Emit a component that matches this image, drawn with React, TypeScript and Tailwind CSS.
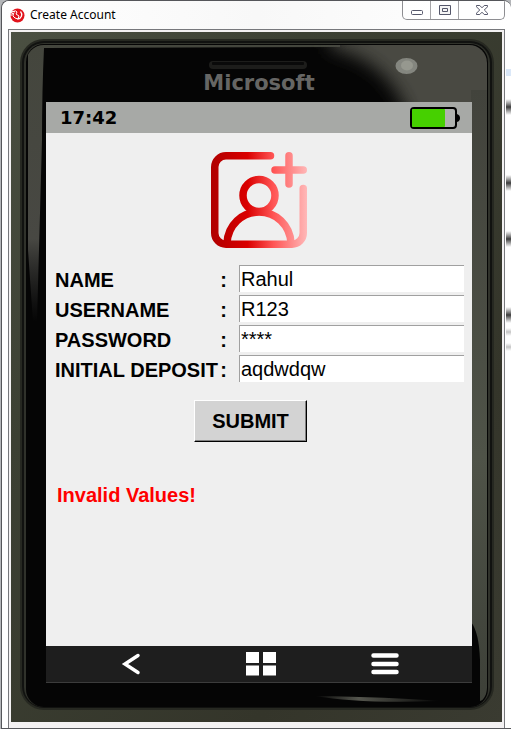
import React, { useState } from "react";

function TitleBar() {
  return (
    <header className="flex h-[28px] items-start justify-between bg-gradient-to-r from-white via-[#f8f8f8] to-white pl-2">
      <div className="flex h-7 items-center gap-[5px]">
        <svg width="15" height="15" viewBox="0 0 15 15" aria-hidden="true">
          <circle cx="7.5" cy="7.5" r="7" fill="#e1131c" />
          <path d="M0 4 4 6M0 7h4M1 3l4 1" fill="none" stroke="#fff" strokeWidth="1.2" />
          <path d="M3 3.500q3-1.500 4 .5L6 6l3 2-1 3-3-1-2-2" fill="none" stroke="#fff" strokeWidth="1" />
          <path d="M10.500 3.500c2.500 3 1 7-3 7.500" fill="none" stroke="#fff" strokeWidth="1.300" />
        </svg>
        <h1 className="font-['Noto_Sans',sans-serif] text-xs text-black">Create Account</h1>
      </div>
      <div className="mr-1.5 flex h-[19px] rounded-b-[5px] border border-t-0 border-[#8e8e92] bg-white/70">
        <button aria-label="Minimize" className="flex w-7 items-center justify-center border-r border-[#a5a5a8]">
          <svg width="12" height="12" viewBox="0 0 12 12">
            <rect x=".5" y="6.500" width="11" height="4" rx="1" fill="#fff" stroke="#55576a" />
          </svg>
        </button>
        <button aria-label="Maximize" className="flex w-7 items-center justify-center border-r border-[#a5a5a8]">
          <svg width="12" height="10" viewBox="0 0 12 10">
            <path d="M.5.5h11v9H.5zM3.500 3.500h5v3h-5z" fill="#f5f5f5" stroke="#55576a" />
          </svg>
        </button>
        <button aria-label="Close" className="flex w-[45px] items-center justify-center">
          <svg width="12" height="10" viewBox="0 0 12 10">
            <path d="M.5.5h3.300L6 2.800 8.200.5h3.300v1.300L8.300 5l3.200 3.200v1.300H8.200L6 7.200 3.800 9.500H.5V8.200L3.700 5 .5 1.800z" fill="#fff" stroke="#55576a" />
          </svg>
        </button>
      </div>
    </header>
  );
}

function PhoneShell() {
  return (
    <svg
      className="absolute inset-0 h-full w-full"
      viewBox="11 32 491 690"
      preserveAspectRatio="none"
      aria-hidden="true"
    >
      <defs>
        <linearGradient id="case" x1="0" y1="0" x2="1" y2="1">
          <stop offset="0" stopColor="#4b5042" />
          <stop offset=".3" stopColor="#3c4033" />
          <stop offset=".75" stopColor="#34352a" />
          <stop offset="1" stopColor="#3a3b31" />
        </linearGradient>
        <linearGradient id="leftGlare" x1="0" y1="0" x2="0" y2="1">
          <stop offset="0" stopColor="#44463d" />
          <stop offset=".7" stopColor="#484843" />
          <stop offset="1" stopColor="#333" stopOpacity="0" />
        </linearGradient>
        <linearGradient id="rightGlare" x1="0" y1="0" x2="0" y2="1">
          <stop offset="0" stopColor="#42433c" />
          <stop offset=".6" stopColor="#4f5348" />
          <stop offset="1" stopColor="#3d4038" />
        </linearGradient>
        <linearGradient id="foot" x1="0" y1="0" x2="1" y2="0">
          <stop offset="0" stopColor="#55564e" stopOpacity="0" />
          <stop offset=".35" stopColor="#55564e" />
          <stop offset="1" stopColor="#55564e" stopOpacity="0" />
        </linearGradient>
        <filter id="soft" x="-20%" y="-50%" width="140%" height="200%">
          <feGaussianBlur stdDeviation="9" />
        </filter>
        <clipPath id="glass">
          <rect x="26" y="45" width="461" height="661" rx="18" />
        </clipPath>
      </defs>
      <rect x="11" y="32" width="491" height="690" fill="url(#case)" />
      <rect x="20" y="39" width="474" height="671" rx="24" fill="#262821" />
      <rect x="22" y="41" width="470" height="667" rx="22" fill="#111210" />
      <rect x="24" y="43" width="466" height="664" rx="20" fill="#30322b" />
      <rect x="26" y="44" width="462" height="663" rx="18" fill="#050505" />
      <g clipPath="url(#glass)">
        <path d="M28 45H340V47L44 48Q42 90 42 140L37 322H33L28 250z" fill="url(#leftGlare)" />
        <path d="M330 20H520V130H412Q396 62 330 48z" fill="#484942" filter="url(#soft)" />
        <path d="M471 90H487V690Q487 699 480 701V660Q479 632 471 622z" fill="url(#rightGlare)" />
        <path d="M315 696Q390 697 440 701Q360 704 315 696z" fill="url(#foot)" />
      </g>
      <rect x="209" y="61" width="98" height="8" rx="4" fill="#1d1d1b" />
      <rect x="212" y="62" width="92" height="3" rx="1" fill="#0a0a0a" />
      <ellipse cx="406.500" cy="66" rx="11" ry="8" fill="#84867f" />
      <ellipse cx="407" cy="65.500" rx="6" ry="5" fill="#96988f" />
    </svg>
  );
}

function StatusBar() {
  return (
    <div className="flex h-[31px] items-center justify-between bg-[#a7a9a6] pr-3 pl-3.5">
      <time className="font-['DejaVu_Sans',sans-serif] text-lg font-bold text-black">17:42</time>
      <svg width="50" height="22" viewBox="0 0 50 22" role="img" aria-label="Battery">
        <rect x="1" y="1" width="45" height="20" rx="3" fill="#b0b2af" stroke="#000" strokeWidth="2" />
        <rect x="2" y="2" width="33" height="18" rx="1" fill="#46d000" />
        <path d="M47 7q3 1 3 4t-3 4z" fill="#000" />
      </svg>
    </div>
  );
}

function AddUserIcon() {
  return (
    <svg className="mx-auto" width="96" height="96" viewBox="0 0 96 96" aria-hidden="true">
      <defs>
        <linearGradient id="red" gradientUnits="userSpaceOnUse" x1="0" y1="0" x2="96" y2="0">
          <stop offset="0" stopColor="#af0000" />
          <stop offset=".38" stopColor="#da0000" />
          <stop offset=".65" stopColor="#ff5555" />
          <stop offset="1" stopColor="#ffb8b8" />
        </linearGradient>
      </defs>
      <g fill="none" stroke="url(#red)" strokeWidth="7.500" strokeLinecap="round">
        <path d="M59.500 3.750H15A11.250 11.250 0 0 0 3.750 15V81A11.250 11.250 0 0 0 15 92.250H81A11.250 11.250 0 0 0 92.250 81V36.500" />
        <path d="M64 18H92.250M78 3.750V32" />
        <circle cx="48" cy="43.500" r="16" />
        <path d="M16 91C17 73 31 60 48 60S79 73 80 91" />
      </g>
    </svg>
  );
}

const initialFields = [
  { id: "name", label: "NAME", value: "Rahul" },
  { id: "username", label: "USERNAME", value: "R123" },
  { id: "password", label: "PASSWORD", value: "****" },
  { id: "deposit", label: "INITIAL DEPOSIT", value: "aqdwdqw" },
];

function AccountForm() {
  const [fields, setFields] = useState(initialFields);
  return (
    <form className="mt-[17px] flex flex-col pr-2 pl-[9px]" onSubmit={(e) => e.preventDefault()}>
      <div className="flex flex-col gap-[3px]">
        {fields.map((field) => (
          <div key={field.id} className="flex h-[27px] items-center gap-3">
            <label htmlFor={field.id} className="flex w-[172px] justify-between pt-0.5 font-bold whitespace-nowrap">
              <span>{field.label}</span>
              <span>:</span>
            </label>
            <input
              id={field.id}
              value={field.value}
              onChange={(e) =>
                setFields(fields.map((f) => (f.id === field.id ? { ...f, value: e.target.value } : f)))
              }
              className="h-full min-w-0 flex-1 border-t border-l border-[#a0a0a0] bg-white px-px outline-none"
            />
          </div>
        ))}
      </div>
      <button
        type="submit"
        className="mt-[18px] mr-[157px] ml-[139px] h-[42px] border border-t-white border-r-black border-b-black border-l-white bg-[#d3d3d3] font-bold shadow-[inset_-1px_-1px_0_#808080]"
      >
        SUBMIT
      </button>
      <p role="alert" className="mt-[39px] pl-0.5 font-bold text-[#ff0000]">
        Invalid Values!
      </p>
    </form>
  );
}

function NavBar() {
  return (
    <nav className="flex h-[37px] items-center justify-between border-b border-[#3c3c3c] bg-[#1e1e1e] pr-[69px] pl-[61px]">
      <button aria-label="Back" className="flex w-12 justify-center">
        <svg width="20" height="22" viewBox="0 0 20 22">
          <path d="M17 2.500 4 11l13 8.500" fill="none" stroke="#fff" strokeWidth="3.500" strokeLinecap="round" />
        </svg>
      </button>
      <button aria-label="Home" className="flex w-9 justify-center">
        <svg width="30" height="24" viewBox="0 0 30 24">
          <path d="M0 0h13v11H0zM17 0h13v11H17zM0 13.500h13v10H0zM17 13.500h13v10H17z" fill="#fff" />
        </svg>
      </button>
      <button aria-label="Menu" className="flex w-9 justify-center">
        <svg width="28" height="22" viewBox="0 0 28 22">
          <path d="M2.500 2.500h23M2.500 11h23M2.500 19h23" stroke="#fff" strokeWidth="4.500" strokeLinecap="round" />
        </svg>
      </button>
    </nav>
  );
}

function FrameEdge() {
  return (
    <svg width="6" height="700" viewBox="0 0 6 700" aria-hidden="true">
      <defs>
        <linearGradient id="spot" x1="0" y1="0" x2="0" y2="1">
          <stop offset="0" stopColor="#555" stopOpacity="0" />
          <stop offset=".5" stopColor="#3a3a3a" />
          <stop offset="1" stopColor="#555" stopOpacity="0" />
        </linearGradient>
      </defs>
      <g fill="url(#spot)">
        <rect x="1" y="70" width="5" height="16" />
        <rect x="1" y="146" width="5" height="16" />
        <rect x="1" y="202" width="5" height="16" />
        <rect x="1" y="278" width="5" height="16" />
        <rect x="1" y="299" width="5" height="8" opacity=".3" />
        <rect x="1" y="314" width="5" height="8" opacity=".3" />
      </g>
      <rect x="1" y="40" width="5" height="7" fill="#dbe8f8" />
    </svg>
  );
}

export default function App() {
  return (
    <div className="min-h-screen bg-[#b4b6b9] pl-px font-['Liberation_Sans',Arial,sans-serif] text-xl leading-7 text-black">
      <div className="flex min-h-screen flex-col overflow-hidden rounded-t-lg border-y border-l border-[#55565a] bg-white">
        <TitleBar />
        <div className="flex flex-1 overflow-hidden pl-1.5">
          <main className="flex min-w-0 flex-1 flex-col border-x border-t border-[#77787c] bg-[#f3f1f2] px-0.5 pt-0.5 pb-1.5">
            <div className="relative flex flex-1 flex-col">
              <PhoneShell />
              <div className="relative flex flex-1 flex-col pr-[30px] pb-[39px] pl-[35px]">
                <div className="flex h-[70px] items-end justify-center pb-[5px] font-['DejaVu_Sans',sans-serif] text-[21px] font-bold text-[#666664]">
                  Microsoft
                </div>
                <StatusBar />
                <section className="flex-1 bg-[#efefef] pt-[19px]">
                  <AddUserIcon />
                  <AccountForm />
                </section>
                <NavBar />
              </div>
            </div>
          </main>
          <div className="h-0 w-1.5 shrink-0 overflow-visible">
            <FrameEdge />
          </div>
        </div>
      </div>
    </div>
  );
}
